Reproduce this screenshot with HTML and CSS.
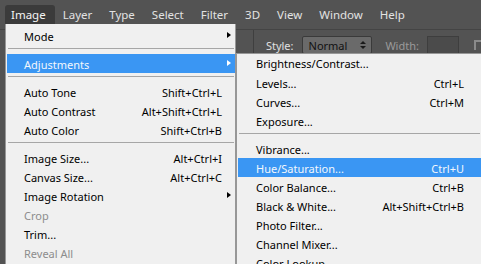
FILE: index.html
```html
<!DOCTYPE html>
<html>
<head>
<meta charset="utf-8">
<title>Image menu</title>
<link rel="stylesheet" href="styles.css">
</head>
<body>
  <div class="menubar">
    <div class="menubar-item open">Image</div>
    <div class="menubar-item">Layer</div>
    <div class="menubar-item">Type</div>
    <div class="menubar-item">Select</div>
    <div class="menubar-item">Filter</div>
    <div class="menubar-item">3D</div>
    <div class="menubar-item">View</div>
    <div class="menubar-item">Window</div>
    <div class="menubar-item">Help</div>
  </div>

  <div class="optionsbar">
    <div class="opt-divider"></div>
    <span class="opt-label">Style:</span>
    <div class="opt-select">Normal<span class="updown"></span></div>
    <span class="opt-label disabled">Width:</span>
    <div class="opt-input"></div>
    <div class="opt-swap"></div>
  </div>

  <!-- Image menu -->
  <div class="menu main-menu">
    <div class="row"><span class="label">Mode</span><span class="key"></span><span class="arrow"></span></div>
    <div class="sep"></div>
    <div class="row active"><span class="label">Adjustments</span><span class="key"></span><span class="arrow"></span></div>
    <div class="sep"></div>
    <div class="row"><span class="label">Auto Tone</span><span class="key">Shift+Ctrl+L</span><span></span></div>
    <div class="row"><span class="label">Auto Contrast</span><span class="key">Alt+Shift+Ctrl+L</span><span></span></div>
    <div class="row"><span class="label">Auto Color</span><span class="key">Shift+Ctrl+B</span><span></span></div>
    <div class="sep"></div>
    <div class="row"><span class="label">Image Size...</span><span class="key">Alt+Ctrl+I</span><span></span></div>
    <div class="row"><span class="label">Canvas Size...</span><span class="key">Alt+Ctrl+C</span><span></span></div>
    <div class="row"><span class="label">Image Rotation</span><span class="key"></span><span class="arrow"></span></div>
    <div class="row disabled"><span class="label">Crop</span><span class="key"></span><span></span></div>
    <div class="row"><span class="label">Trim...</span><span class="key"></span><span></span></div>
    <div class="row disabled"><span class="label">Reveal All</span><span class="key"></span><span></span></div>
  </div>

  <!-- Adjustments submenu -->
  <div class="menu sub-menu">
    <div class="row"><span class="label">Brightness/Contrast...</span><span class="key"></span></div>
    <div class="row"><span class="label">Levels...</span><span class="key">Ctrl+L</span></div>
    <div class="row"><span class="label">Curves...</span><span class="key">Ctrl+M</span></div>
    <div class="row"><span class="label">Exposure...</span><span class="key"></span></div>
    <div class="sep"></div>
    <div class="row"><span class="label">Vibrance...</span><span class="key"></span></div>
    <div class="row active"><span class="label">Hue/Saturation...</span><span class="key">Ctrl+U</span></div>
    <div class="row"><span class="label">Color Balance...</span><span class="key">Ctrl+B</span></div>
    <div class="row"><span class="label">Black &amp; White...</span><span class="key">Alt+Shift+Ctrl+B</span></div>
    <div class="row"><span class="label">Photo Filter...</span><span class="key"></span></div>
    <div class="row"><span class="label">Channel Mixer...</span><span class="key"></span></div>
    <div class="row"><span class="label">Color Lookup...</span><span class="key"></span></div>
  </div>
</body>
</html>
```

FILE: styles.css
```css
html, body
{
margin: 0;
padding: 0;
}

body
{
width: 481px;
height: 264px;
overflow: hidden;
position: relative;
background: #535353;
font-family: "Noto Sans", "Open Sans", sans-serif;
}

/* top menu bar */
.menubar
{
display: flex;
gap: 2px;
height: 30px;
padding: 5px 0 0 5px;
box-sizing: border-box;
border-bottom: 1px solid #444444;
}

.menubar-item
{
height: 19px;
padding: 1px 9px 0 6px;
box-sizing: border-box;
font-size: 11.5px;
line-height: 18px;
color: #e2e2e2;
}

.menubar-item.open
{
background: #3b3b3b;
color: #f4f4f4;
border-radius: 3px 3px 0 0;
}

/* tool options bar */
.optionsbar
{
display: flex;
align-items: center;
height: 30px;
padding-left: 253px;
font-size: 11px;
color: #e0e0e0;
}

.opt-divider
{
width: 1px;
height: 30px;
background: #3f3f3f;
margin-right: 12px;
}

.opt-label
{
margin-right: 8px;
padding-top: 1px;
}

.opt-label.disabled
{
color: #9a9a9a;
margin-left: 13px;
}

.opt-select
{
position: relative;
width: 78px;
height: 18px;
box-sizing: border-box;
padding-left: 6px;
line-height: 17px;
background: #6a6a6a;
border: 1px solid #3a3a3a;
border-radius: 2px;
color: #111111;
}

.updown
{
position: absolute;
right: 5px;
top: 4px;
width: 0;
height: 0;
border-left: 3px solid transparent;
border-right: 3px solid transparent;
border-bottom: 3px solid #1a1a1a;
}

.updown:after
{
content: "";
position: absolute;
left: -3px;
top: 5px;
border-left: 3px solid transparent;
border-right: 3px solid transparent;
border-top: 3px solid #1a1a1a;
}

.opt-input
{
width: 35px;
height: 18px;
box-sizing: border-box;
background: #4b4b4b;
border: 1px solid #3e3e3e;
}

.opt-swap
{
width: 6px;
height: 8px;
margin-left: 15px;
border-top: 2px solid #8a8a8a;
border-left: 2px solid #8a8a8a;
}

/* drop-down menus */
.menu
{
position: absolute;
background: #f0f0f0;
border: 1px solid #979797;
box-sizing: border-box;
font-size: 11px;
color: #000000;
}

.main-menu
{
left: 5px;
top: 24px;
width: 231px;
height: 250px;
padding: 2px 0 0 1px;
border-top: none;
}

.sub-menu
{
left: 236px;
top: 53px;
right: 0;
height: 220px;
padding: 0 0 0 1px;
border-right: none;
}

.row
{
display: grid;
height: 19px;
box-sizing: border-box;
padding-top: 2px;
line-height: 17px;
white-space: nowrap;
}

.main-menu .row
{
grid-template-columns: 1fr auto 13px;
padding-left: 17px;
}

.sub-menu .row
{
grid-template-columns: 1fr auto;
padding-left: 18px;
padding-right: 17px;
}

.sub-menu .row:first-child
{
padding-top: 1px;
}

.row.active
{
background: #3a96f3;
color: #f2f6fc;
}

.row.disabled
{
color: #8d8d8d;
}

.arrow
{
position: relative;
}

.arrow:after
{
content: "";
position: absolute;
left: 5px;
top: 4px;
border-top: 3px solid transparent;
border-bottom: 3px solid transparent;
border-left: 4px solid #000000;
}

.row.active .arrow:after
{
border-left-color: #ffffff;
}

.sep
{
height: 1px;
margin: 3px 1px 5px 1px;
background: #a6a6a6;
}
```
